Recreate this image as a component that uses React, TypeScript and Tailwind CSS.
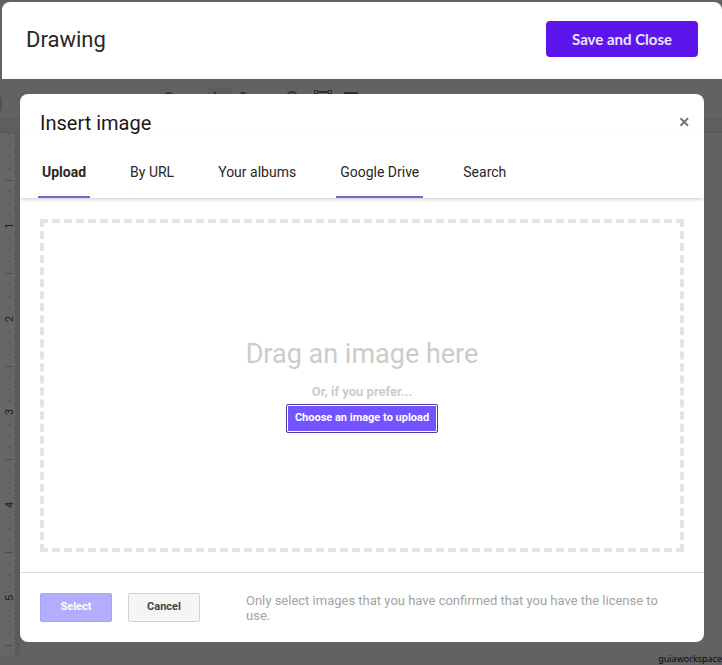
import React from "react";

const tabs = [
  { label: "Upload", className: "border-[#7468c9] font-bold" },
  { label: "By URL", className: "border-transparent" },
  { label: "Your albums", className: "border-transparent" },
  { label: "Google Drive", className: "border-[#7468c9]" },
  { label: "Search", className: "border-transparent" },
];

const inches = [1, 2, 3, 4, 5];
const eighths = Array.from({ length: 45 }, (_, i) => i);

const Ruler = () => (
  <svg className="block w-5 h-[522px]" viewBox="0 0 20 522">
    <rect width="15" height="522" fill="#666666" />
    <rect x="15" width="5" height="522" fill="#5b5b5b" />
    {/* number on every inch, long tick on every half inch */}
    {eighths.map((n) => {
      if (n % 8 === 0 && n > 0) return null;
      const half = n % 8 === 4;
      const y = Math.round(n * 11.625) + 0.5;
      return (
        <line
          key={n}
          x1={half ? 5 : 8}
          x2={half ? 13 : 10}
          y1={y}
          y2={y}
          stroke={half ? "#4c4c4c" : "#4e4e4e"}
        />
      );
    })}
    {inches.map((n) => (
      <text
        key={n}
        transform={`translate(13 ${n * 93}) rotate(-90)`}
        textAnchor="middle"
        fontFamily="Roboto, sans-serif"
        fontSize="11"
        fill="#1c1c1c"
      >
        {n}
      </text>
    ))}
  </svg>
);

const Toolbar = () => (
  <div className="h-10 border-b border-[#595959]">
    <svg className="block h-8 w-[400px]" viewBox="0 0 400 32" fill="none" stroke="#303030" strokeWidth="2">
      <path d="M1 18v16" stroke="#505050" />
      <rect x="208" y="8" width="24" height="24" fill="#5a5e60" stroke="none" />
      <path d="M164 17a5 5 0 0 1 9 0" />
      <path d="M214 12l9 9h-9z" fill="#303030" stroke="none" />
      <path d="M241 15l1-1h2l1 1" />
      <path d="M287 18a5 5 0 0 1 10 0" />
      <path d="M318 13h10" />
      <path d="M314.500 11.500h3v3h-3zM328.500 11.500h3v3h-3z" strokeWidth="1" />
      <path d="M344 14h14" />
    </svg>
  </div>
);

const InsertImageDialog = () => (
  <div
    role="dialog"
    aria-label="Insert image"
    className="col-start-1 row-start-1 self-start mt-[15px] ml-5 mr-[18px] rounded-lg bg-white overflow-hidden"
  >
    <div className="flex items-start justify-between px-5 pt-4">
      <h2 className="text-xl leading-[26px] text-[#1b1717]">Insert image</h2>
      <button type="button" aria-label="Close" className="-mr-3 p-[6px] text-[#777]">
        <svg className="size-3" viewBox="0 0 12 12" stroke="currentColor" strokeWidth="2">
          <path d="M2.500 2.200l7.500 7.600M10 2.200l-7.500 7.600" />
        </svg>
      </button>
    </div>

    <nav className="flex gap-9 px-[18px] pt-4 shadow-[0_2px_4px_-1px_rgba(0,0,0,0.22)]">
      {tabs.map((tab) => (
        <button
          key={tab.label}
          type="button"
          className={`h-[46px] border-b-2 px-1 pb-1 text-sm text-[#2b2525] ${tab.className}`}
        >
          {tab.label}
        </button>
      ))}
    </nav>

    <div className="px-5 pt-[21px] pb-5">
      <div className="flex h-[333px] flex-col items-center border-4 border-dashed border-[#e4e4e4] pt-[115px]">
        <p className="text-[27px] leading-8 text-[#cccccc]">Drag an image here</p>
        <p className="mt-3 text-[13px] leading-5 font-bold text-[#cccccc]">Or, if you prefer...</p>
        <button
          type="button"
          className="mt-[2px] h-[29px] rounded-[2px] border border-[#4f3fa5] bg-[#7352ff] px-2 text-[11px] font-bold text-white shadow-[inset_0_0_0_1px_white]"
        >
          Choose an image to upload
        </button>
      </div>
    </div>

    <div className="flex items-start border-t border-[#dedede] px-5 py-5">
      <button
        type="button"
        className="h-[29px] w-[72px] shrink-0 rounded-[2px] border border-[#a9a3f5] bg-[#b3adff] text-[11px] font-bold text-white"
      >
        Select
      </button>
      <button
        type="button"
        className="ml-4 h-[29px] w-[72px] shrink-0 rounded-[2px] border border-[#d4d4d4] bg-[#f5f5f5] text-[11px] font-bold text-[#444]"
      >
        Cancel
      </button>
      <p className="ml-[46px] mr-5 h-[29px] text-[13px] leading-[15px] text-[#a3a3a3]">
        Only select images that you have confirmed that you have the license to use.
      </p>
    </div>
  </div>
);

const App: React.FC = () => {
  return (
    <div className="flex min-h-screen flex-col bg-[#626262] pt-[2px] font-['Roboto',sans-serif]">
      <header className="ml-[2px] flex h-[77px] items-start justify-between rounded-t-lg bg-white px-6 pt-[19px]">
        <h1 className="text-[22px] leading-[38px] text-[#2b2525]">Drawing</h1>
        <button
          type="button"
          className="h-9 w-[152px] rounded bg-[#5c16ec] font-['Lato',sans-serif] text-[15px] font-bold text-[#ece4ff]"
        >
          Save and Close
        </button>
      </header>

      <main className="grid flex-1 grid-cols-1">
        <div className="col-start-1 row-start-1">
          <Toolbar />
          <div className="h-[14px] border-b border-[#555] bg-[#5e5e5e]" />
          <Ruler />
        </div>
        <InsertImageDialog />
        <span className="col-start-1 row-start-1 self-end justify-self-end font-['Noto_Sans',sans-serif] text-[9px] leading-3 text-[#0c0c0c]">
          guiaworkspace
        </span>
      </main>
    </div>
  );
};

export default App;
